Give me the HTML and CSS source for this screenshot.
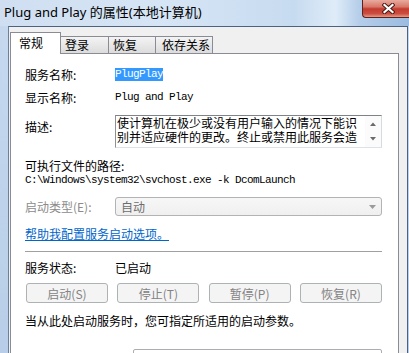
FILE: index.html
```html
<!DOCTYPE html>
<html lang="zh-CN">
<head>
<meta charset="utf-8">
<title>Plug and Play 的属性(本地计算机)</title>
<link rel="stylesheet" href="styles.css">
</head>
<body>
<div class="window">
  <div class="titlebar">
    <span class="title">Plug and Play 的属性(本地计算机)</span>
    <div class="close" aria-label="关闭">
      <svg width="13" height="11" viewBox="0 0 13 11">
        <path d="M2.5 2 L10.5 9 M10.5 2 L2.5 9" stroke="#4a1a14" stroke-width="4.2" stroke-linecap="square" fill="none"/>
        <path d="M2.5 2 L10.5 9 M10.5 2 L2.5 9" stroke="#ffffff" stroke-width="2.2" stroke-linecap="square" fill="none"/>
      </svg>
    </div>
  </div>
  <div class="client">
    <div class="tabs">
      <div class="tab active">常规</div>
      <div class="tab t2">登录</div>
      <div class="tab t3">恢复</div>
      <div class="tab t4">依存关系</div>
    </div>
    <div class="panel">
      <div class="row r1"><span class="label">服务名称:</span><span class="mono sel">PlugPlay</span></div>
      <div class="row r2"><span class="label">显示名称:</span><span class="mono">Plug and Play</span></div>
      <div class="row desc">
        <span class="label dlabel">描述:</span>
        <div class="descbox">
          <div class="desctext">使计算机在极少或没有用户输入的情况下能识<br>别并适应硬件的更改。终止或禁用此服务会造</div>
          <div class="scroll">
            <div class="arrow"><svg width="6" height="4" viewBox="0 0 6 4"><path d="M0 4 L3 0.5 L6 4 Z" fill="#6a6a6a"/></svg></div>
            <div class="arrow"><svg width="6" height="4" viewBox="0 0 6 4"><path d="M0 0 L3 3.5 L6 0 Z" fill="#6a6a6a"/></svg></div>
          </div>
        </div>
      </div>
      <div class="row r-exec">可执行文件的路径:</div>
      <div class="row r-path"><span class="mono">C:\Windows\system32\svchost.exe -k DcomLaunch</span></div>
      <div class="row r-combo">
        <span class="label disabled">启动类型(E):</span>
        <div class="combo">
          <span>自动</span>
          <svg width="7" height="4" viewBox="0 0 7 4"><path d="M0 0 L3.5 4 L7 0 Z" fill="#9a9a9a"/></svg>
        </div>
      </div>
      <div class="row r-link"><span class="link">帮助我配置服务启动选项。</span></div>
      <div class="sep"></div>
      <div class="row r-status"><span class="label">服务状态:</span><span>已启动</span></div>
      <div class="buttons">
        <div class="btn">启动(S)</div>
        <div class="btn">停止(T)</div>
        <div class="btn">暂停(P)</div>
        <div class="btn">恢复(R)</div>
      </div>
      <div class="row r-note">当从此处启动服务时，您可指定所适用的启动参数。</div>
      <div class="r-param"><div class="param"></div></div>
    </div>
  </div>
</div>
</body>
</html>
```
FILE: styles.css
```css
html, body {
  margin: 0;
  padding: 0;
}
body {
  width: 409px;
  height: 353px;
  overflow: hidden;
  font-family: "Noto Sans CJK SC", sans-serif;
  font-size: 12px;
  color: #000;
}
.window {
  width: 409px;
  height: 353px;
  display: flex;
  flex-direction: column;
  background: linear-gradient(#c6d9ef, #b8cee8);
  overflow: hidden;
}
.titlebar {
  height: 26px;
  flex: none;
  display: flex;
  align-items: flex-start;
  background: linear-gradient(to right, #cfdff1 0%, #d6e5f5 40%, #c7dbf0 72%, #dfecf8 82%, #b4cde9 88%, #9bbbe0 100%);
}
.title {
  font-family: "Noto Sans", "Noto Sans CJK SC", sans-serif;
  font-size: 13px;
  line-height: 16px;
  padding: 4px 0 0 4px;
  white-space: nowrap;
}
.close {
  margin-left: auto;
  width: 47px;
  height: 18px;
  box-sizing: border-box;
  border: 1px solid #5e211b;
  border-top: none;
  border-right: none;
  border-radius: 0 0 0 4px;
  background: linear-gradient(#e8ab9e 0%, #d8776a 40%, #c43b2f 52%, #cc4d40 80%, #e59a86 100%);
  display: flex;
  align-items: center;
  justify-content: center;
  padding: 0 0 1px 4px;
}
.close svg {
  display: block;
}
.client {
  flex: 1;
  margin: 0 1px 0 8px;
  border: 1px solid #4d627e;
  border-bottom: none;
  border-left-color: #6a809d;
  background: #f0f0f0;
  padding: 5px 8px 0 1px;
  display: flex;
  flex-direction: column;
  min-height: 0;
}
.tabs {
  display: flex;
  align-items: flex-end;
  height: 21px;
  flex: none;
}
.tab {
  box-sizing: border-box;
  height: 17px;
  line-height: 16px;
  border: 1px solid #898c95;
  border-left: none;
  border-bottom: none;
  background: linear-gradient(#f4f4f4, #e8e8e8 50%, #dcdcdc);
  padding-left: 4px;
  white-space: nowrap;
}
.tab.active {
  position: relative;
  z-index: 1;
  height: 22px;
  line-height: 19px;
  margin-bottom: -1px;
  border-left: 1px solid #898c95;
  background: #fff;
  width: 51px;
  padding-left: 8px;
}
.t2 { width: 48px; }
.t3 { width: 47px; }
.t4 { width: 57px; padding-left: 6px; }
.panel {
  flex: 1;
  background: #fff;
  border: 1px solid #898c95;
  border-bottom: none;
  padding: 13px 16px 0 14px;
  display: flex;
  flex-direction: column;
}
.row {
  display: flex;
  align-items: center;
  height: 15px;
  line-height: 15px;
  flex: none;
  white-space: nowrap;
}
.label {
  width: 90px;
  flex: none;
}
.disabled {
  color: #8b8b8b;
}
.mono {
  font-family: "Liberation Mono", monospace;
  font-size: 11px;
  letter-spacing: -0.6px;
}
.sel {
  background: #3399ff;
  color: #fff;
  line-height: 13px;
}
.r2 { margin-top: 8px; }
.desc {
  margin-top: 10px;
  height: 33px;
  align-items: flex-start;
}
.dlabel {
  padding-top: 4px;
}
.descbox {
  width: 267px;
  height: 33px;
  box-sizing: border-box;
  border: 1px solid;
  border-color: #7e8289 #d6dbe2 #dde2e8 #8d9096;
  display: flex;
}
.desctext {
  flex: 1;
  padding: 0 0 0 1px;
  line-height: 14px;
  white-space: nowrap;
}
.scroll {
  width: 16px;
  flex: none;
  display: flex;
  flex-direction: column;
  background: #fbfbfb;
}
.arrow {
  flex: 1;
  display: flex;
  align-items: center;
  justify-content: center;
}
.arrow svg { display: block; }
.r-exec { margin-top: 10px; }
.r-combo {
  margin-top: 9px;
  height: 19px;
}
.combo {
  width: 267px;
  height: 19px;
  box-sizing: border-box;
  border: 1px solid #b3b3b3;
  border-radius: 3px;
  background: linear-gradient(#f7f7f7, #efefef);
  color: #6d6d6d;
  padding: 0 5px 0 5px;
  display: flex;
  align-items: center;
  justify-content: space-between;
}
.combo svg { display: block; }
.r-link { margin-top: 10px; }
.link {
  color: #0066cc;
  text-decoration: underline;
}
.sep {
  height: 1px;
  background: #a0a0a0;
  margin-top: 10px;
  flex: none;
}
.r-status { margin-top: 8px; }
.buttons {
  margin: 8px 0 0 1px;
  height: 20px;
  display: flex;
  justify-content: space-between;
  flex: none;
}
.btn {
  width: 82px;
  height: 20px;
  box-sizing: border-box;
  border: 1px solid #adb2b5;
  border-radius: 3px;
  background: #f4f4f4;
  color: #838383;
  display: flex;
  align-items: center;
  justify-content: center;
  line-height: 15px;
}
.r-note { margin-top: 10px; }
.r-param {
  margin-top: 21px;
  display: flex;
  flex: none;
}
.param {
  margin-left: 108px;
  width: 249px;
  height: 20px;
  box-sizing: border-box;
  border: 1px solid #abadb3;
  border-radius: 2px;
}
```
